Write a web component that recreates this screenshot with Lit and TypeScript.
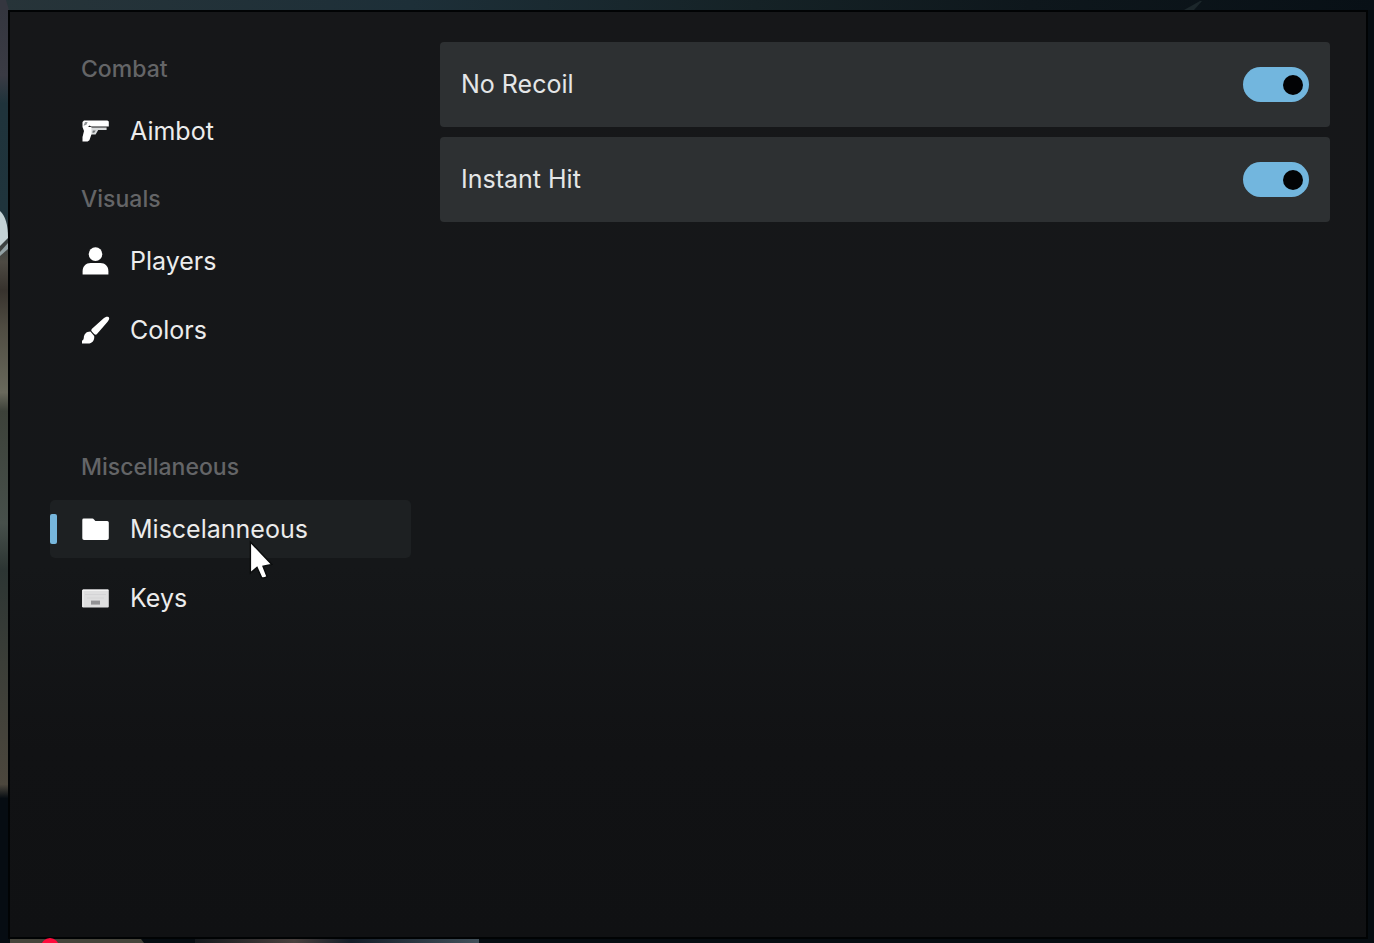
import { LitElement, html, svg, css, nothing, type TemplateResult } from "lit";
import { customElement, property, state } from "lit/decorators.js";

interface NavItem {
  id: string;
  label: string;
}

interface NavGroup {
  title: string;
  spaced?: boolean;
  items: NavItem[];
}

const GROUPS: NavGroup[] = [
  { title: "Combat", items: [{ id: "aimbot", label: "Aimbot" }] },
  {
    title: "Visuals",
    items: [
      { id: "players", label: "Players" },
      { id: "colors", label: "Colors" },
    ],
  },
  {
    title: "Miscellaneous",
    spaced: true,
    items: [
      { id: "misc", label: "Miscelanneous" },
      { id: "keys", label: "Keys" },
    ],
  },
];

const ICONS: Record<string, TemplateResult> = {
  aimbot: svg`
    <path fill="#fff" d="M1.5 5 L3 3.6 H26.4 L27.8 4.4 V9.4 H10 L8.6 8.4 L7 10 H1.5 Z"/>
    <path fill="#8f9395" d="M4 5 L6.6 5 L5.4 7.8 L2.5 8.8 Z"/>
    <path fill="#d9dbdc" d="M8 10.4 H25.6 V13 H17.2 L14.6 17.6 H10 Z"/>
    <path fill="#fff" d="M1.5 10 H10.4 V17.4 L8.4 23.2 L6.6 24.4 H1.5 V20 L3 14 Z"/>
    <path fill="#6f7375" d="M11.8 13.4 H14.8 L13.2 15.8 H11.4 Z"/>`,
  players: svg`
    <circle cx="14.5" cy="7.1" r="6.8" fill="#fff"/>
    <path fill="#fff" d="M1.6 27.4 V24.5 C1.6 19 5 16 9.6 16 H19.4 C24 16 27.4 19 27.4 24.5 V27.4 Z"/>`,
  colors: svg`
    <path fill="#fff" d="M27.8 1.2 C26 .4 24.4 1 22.4 2.6 L11 12.8 C10.2 13.6 10 14.6 10.8 15.6 L13.4 18.2 C14.4 19 15.4 18.8 16.2 17.8 L26.4 6 C28 4 28.8 2.2 27.8 1.2 Z"/>
    <path fill="#fff" d="M9.4 15.6 C5 15.6 3 18.6 2.8 21.8 C2.6 23.6 2 24.4 1 24.8 V27.6 H7 C11.2 27.6 13.8 24.4 13.2 20 Z"/>`,
  misc: svg`
    <path fill="#fff" d="M1.3 5 Q1.3 3.6 2.7 3.6 H11.4 Q12.4 3.6 13 4.5 L14.4 6 H26.2 Q27.8 6 27.8 7.6 V23.2 Q27.8 25 26 25 H3.1 Q1.3 25 1.3 23.2 Z"/>`,
  keys: svg`
    <rect x="1.3" y="5.6" width="26.5" height="18" rx="1" fill="#dededf"/>
    <path d="M1.8 6.1 H27.3 M1.8 6.1 V23.1" stroke="#fff" stroke-width="1" fill="none"/>
    <path d="M4 10.5 H25 M6 14 H23" stroke="#d4d4d6" stroke-width="1.2" fill="none"/>
    <rect x="10" y="16.6" width="9" height="4" fill="#929295"/>`,
};

@customElement("nav-entry")
class NavEntry extends LitElement {
  @property() icon = "";
  @property() label = "";
  @property({ type: Boolean }) active = false;

  static styles = css`
    :host {
      display: block;
    }
    .entry {
      display: flex;
      align-items: center;
      width: 100%;
      height: 58px;
      padding: 0;
      border: 0;
      border-radius: 5px;
      background: transparent;
      color: #ececec;
      font: 400 25px/30px Inter, "Liberation Sans", sans-serif;
      text-align: left;
      cursor: pointer;
    }
    .active {
      background: #1d2022;
    }
    .marker {
      width: 7px;
      height: 30px;
      border-radius: 2px;
    }
    .active .marker {
      background: #76b6dc;
    }
    .icon {
      width: 29px;
      height: 29px;
      margin: 0 20px 0 24px;
    }
  `;

  render() {
    return html`<button
      type="button"
      class="entry ${this.active ? "active" : ""}"
      aria-current=${this.active ? "page" : nothing}
    >
      <span class="marker"></span>
      <svg class="icon" viewBox="0 0 29 29" aria-hidden="true">${ICONS[this.icon]}</svg>
      <span>${this.label}</span>
    </button>`;
  }
}

@customElement("toggle-row")
class ToggleRow extends LitElement {
  @property() label = "";
  @property({ type: Boolean }) checked = false;

  static styles = css`
    :host {
      display: block;
    }
    .row {
      display: flex;
      align-items: center;
      justify-content: space-between;
      min-height: 85px;
      padding: 0 21px;
      box-sizing: border-box;
      border-radius: 4px;
      background: #2d3032;
      color: #e4e6e7;
      font: 400 25px/31px Inter, "Liberation Sans", sans-serif;
      cursor: pointer;
    }
    .switch {
      appearance: none;
      display: flex;
      align-items: center;
      width: 66px;
      height: 35px;
      margin: 0;
      padding: 0 6px;
      box-sizing: border-box;
      border-radius: 18px;
      background: #4a4e51;
      cursor: pointer;
    }
    .switch::before {
      content: "";
      width: 20px;
      height: 20px;
      border-radius: 50%;
      background: #020305;
    }
    .switch:checked {
      justify-content: flex-end;
      background: #72b6de;
    }
  `;

  render() {
    return html`<label class="row">
      <span>${this.label}</span>
      <input class="switch" type="checkbox" role="switch" .checked=${this.checked} />
    </label>`;
  }
}

@customElement("app-root")
class AppRoot extends LitElement {
  @state() private current = "misc";

  static styles = css`
    :host {
      display: block;
      position: relative;
      min-height: 100vh;
      box-sizing: border-box;
      padding: 10px 6px 4px 8px;
      overflow: hidden;
      background: #060c11;
    }
    .scene {
      position: absolute;
      inset: 0;
      width: 100%;
      height: 100%;
    }
    .scrubber {
      position: absolute;
      left: 41px;
      bottom: -13px;
      width: 18px;
      height: 18px;
      border-radius: 50%;
      background: #ff0a3c;
    }
    .window {
      position: relative;
      display: flex;
      gap: 29px;
      min-height: calc(100vh - 14px);
      box-sizing: border-box;
      padding: 30px 36px 30px 40px;
      border: 2px solid #010304;
      background: linear-gradient(#161719, #151719 60%, #111214 80%, #101113);
    }
    .nav {
      display: flex;
      flex-direction: column;
      flex: 0 0 361px;
      gap: 27px;
      padding-top: 15px;
    }
    .group {
      display: flex;
      flex-direction: column;
      gap: 11px;
    }
    .spaced {
      margin-top: 69px;
    }
    .title {
      margin: 0 0 10px 31px;
      color: #646567;
      font: 500 23px/24px Inter, "Liberation Sans", sans-serif;
    }
    .panel {
      display: flex;
      flex: 1;
      flex-direction: column;
      gap: 10px;
      min-width: 0;
    }
    .holder {
      position: relative;
    }
    .pointer {
      position: absolute;
      left: 199px;
      top: 39px;
      width: 26px;
      height: 42px;
      pointer-events: none;
      z-index: 1;
    }
  `;

  private renderScene() {
    return html`<svg class="scene" viewBox="0 0 1374 943" preserveAspectRatio="none" aria-hidden="true">
      <defs>
        <linearGradient id="sky">
          <stop offset="0" stop-color="#273439" />
          <stop offset="0.3" stop-color="#1d2f38" />
          <stop offset="0.55" stop-color="#152226" />
          <stop offset="0.75" stop-color="#0e171c" />
          <stop offset="1" stop-color="#081016" />
        </linearGradient>
        <linearGradient id="side" x1="0" y1="0" x2="0" y2="1">
          <stop offset="0" stop-color="#34363f" />
          <stop offset="0.07" stop-color="#3a3b44" />
          <stop offset="0.1" stop-color="#1f333b" />
          <stop offset="0.22" stop-color="#1f343c" />
          <stop offset="0.27" stop-color="#4d4a43" />
          <stop offset="0.3" stop-color="#37322d" />
          <stop offset="0.34" stop-color="#4f4c42" />
          <stop offset="0.41" stop-color="#69695c" />
          <stop offset="0.43" stop-color="#3c4139" />
          <stop offset="0.55" stop-color="#47504b" />
          <stop offset="0.6" stop-color="#2c3533" />
          <stop offset="0.7" stop-color="#3b3e38" />
          <stop offset="0.83" stop-color="#4c473d" />
          <stop offset="0.845" stop-color="#060c12" />
          <stop offset="1" stop-color="#060c12" />
        </linearGradient>
        <linearGradient id="glint">
          <stop offset="0" stop-color="#15191d" />
          <stop offset="0.35" stop-color="#49403e" />
          <stop offset="0.55" stop-color="#141d28" />
          <stop offset="1" stop-color="#41505a" />
        </linearGradient>
      </defs>
      <rect width="1374" height="10" fill="url(#sky)" />
      <path d="M1184 10 L1200 1 H1202 L1194 10 Z" fill="#1c272b" />
      <rect y="10" width="8" height="933" fill="url(#side)" />
      <path d="M0 0 H6 L9 10 H0 Z" fill="#34363f" />
      <path d="M0 211 Q8 218 8 238 L0 246 Z" fill="#c3d2d5" />
      <path d="M0 252 L8 243 V249 L0 256 Z" fill="#93a2a5" />
      <path d="M10 939 H141 L144 943 H10 Z" fill="#45443b" />
      <rect x="195" y="939" width="284" height="4" fill="url(#glint)" />
    </svg>`;
  }

  private renderPointer() {
    return html`<svg class="pointer" viewBox="0 0 26 42" aria-hidden="true">
      <path
        d="M1.4 3 V34 L8 28.4 L12.6 38.6 Q15 39.6 18 37.6 L14 27.2 L22.8 25.4 Z"
        fill="#fff"
        stroke="#0a0c0d"
        stroke-width="1.4"
      />
    </svg>`;
  }

  render() {
    return html`
      ${this.renderScene()}
      <main class="window">
        <nav class="nav" aria-label="Sections">
          ${GROUPS.map(
            (group) => html`<section class="group ${group.spaced ? "spaced" : ""}">
              <h2 class="title">${group.title}</h2>
              ${group.items.map(
                (item) => html`<div class="holder">
                  <nav-entry
                    .icon=${item.id}
                    .label=${item.label}
                    .active=${item.id === this.current}
                    @click=${() => (this.current = item.id)}
                  ></nav-entry>
                  ${item.id === "misc" ? this.renderPointer() : nothing}
                </div>`
              )}
            </section>`
          )}
        </nav>
        <section class="panel">
          <toggle-row label="No Recoil" checked></toggle-row>
          <toggle-row label="Instant Hit" checked></toggle-row>
        </section>
      </main>
      <span class="scrubber"></span>
    `;
  }
}
